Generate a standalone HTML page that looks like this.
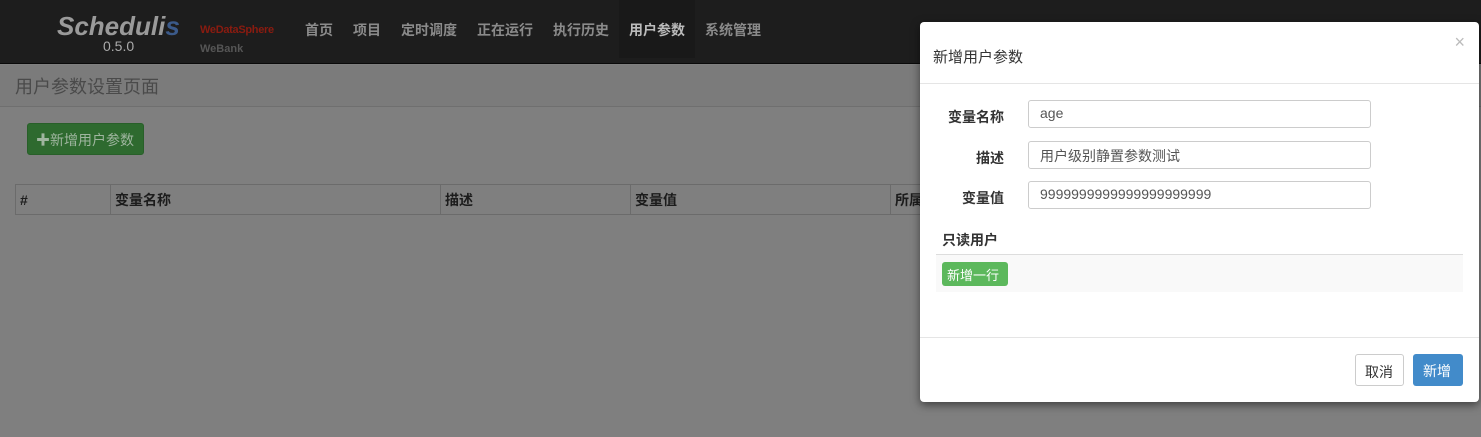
<!DOCTYPE html>
<html><head><meta charset="utf-8"><style>
*{box-sizing:border-box;margin:0;padding:0}
body{width:1481px;height:437px;overflow:hidden;background:#7f7f7f;font-family:"Liberation Sans","Noto Sans CJK SC",sans-serif;font-size:14px;position:relative}
.nav{position:absolute;left:0;top:0;width:1481px;height:64px;background:#1d1d1d;border-bottom:1px solid #0a0a0a}
.logo{position:absolute;left:57px;top:11px;color:#9a9a9a;font-size:26px;font-weight:bold;font-style:italic;letter-spacing:0}
.ver{position:absolute;left:103px;top:38px;color:#aaa;font-size:14px}
.wds{position:absolute;left:200px;top:24px;color:#8a1b10;font-size:11px;font-weight:bold;letter-spacing:-.3px}
.wb{position:absolute;left:200px;top:43px;color:#555;font-size:11px;font-weight:bold}
.menu{position:absolute;top:0;left:295px;height:58px;display:flex}
.menu span{color:#8a8a8a;font-weight:bold;font-size:14px;padding:20px 10px 0;height:58px}
.menu span.act{background:#191919;color:#bbb}
.title{position:absolute;top:65px;left:0;width:1481px;height:42px;background:#7b7b7b;border-bottom:1px solid #6f6f6f;color:#4a4a4a;font-size:18px;padding:8px 15px}
.btn{position:absolute;left:27px;top:123px;width:117px;height:32px;background:#2e6a2f;border:1px solid #285f29;border-radius:3px;color:#9fb59f;font-size:14px;padding:6px 8px}
table{position:absolute;left:15px;top:184px;width:1000px;border-collapse:collapse}
td{border:1px solid #6b6b6b;height:30px;padding:4px;font-weight:bold;color:#1c1c1c;font-size:14px}
.modal{position:absolute;left:920px;top:22px;width:559px;height:380px;background:#fff;border-radius:4px;box-shadow:0 3px 9px rgba(0,0,0,.5)}
.mh{height:62px;border-bottom:1px solid #e5e5e5;padding:24px 13px;font-size:15px;color:#333}
.x{position:absolute;right:14px;top:10px;color:#bbb;font-size:18px}
.lab{position:absolute;font-weight:bold;color:#333;font-size:14px;text-align:right;width:84px;left:0}
.inp{position:absolute;left:108px;width:343px;height:28px;border:1px solid #ccc;border-radius:3px;padding:4px 11px;color:#555;font-size:14px}
.ro{position:absolute;left:22px;top:208px;font-weight:bold;color:#333}
.tb{position:absolute;left:16px;top:232px;height:38px;background:#f9f9f9;border-top:1px solid #ddd}
.add{position:absolute;left:6px;top:7px;width:66px;height:24px;background:#5cb85c;border-radius:3px;color:#fff;font-size:13px;padding:3px 5px}
.mf{position:absolute;left:0;top:315px;width:559px;border-top:1px solid #e5e5e5}
.c{position:absolute;top:332px;left:435px;width:49px;height:32px;border:1px solid #ccc;border-radius:3px;color:#333;padding:7px 9px}
.ok{position:absolute;top:332px;left:493px;width:50px;height:32px;background:#428bca;border-radius:3px;color:#fff;padding:7px 10px}
</style></head><body>
<div class="nav">
<div class="logo">Scheduli<span style="color:#3b5a8a">s</span></div>
<div class="ver">0.5.0</div>
<div class="wds">WeDataSphere</div>
<div class="wb">WeBank</div>
<div class="menu"><span>首页</span><span>项目</span><span>定时调度</span><span>正在运行</span><span>执行历史</span><span class="act">用户参数</span><span>系统管理</span></div>
</div>
<div class="title">用户参数设置页面</div>
<div class="btn">✚新增用户参数</div>
<table><tr><td style="width:95px">#</td><td style="width:330px">变量名称</td><td style="width:190px">描述</td><td style="width:260px">变量值</td><td>所属</td></tr></table>
<div class="modal">
<div class="mh">新增用户参数</div><div class="x">×</div>
<div class="lab" style="top:85px">变量名称</div><div class="inp" style="top:78px">age</div>
<div class="lab" style="top:126px">描述</div><div class="inp" style="top:119px">用户级别静置参数测试</div>
<div class="lab" style="top:166px">变量值</div><div class="inp" style="top:159px">9999999999999999999999</div>
<div class="ro">只读用户</div>
<div class="tb" style="width:527px"><div class="add">新增一行</div></div>
<div class="mf"></div>
<div class="c">取消</div><div class="ok">新增</div>
</div>
</body></html>
